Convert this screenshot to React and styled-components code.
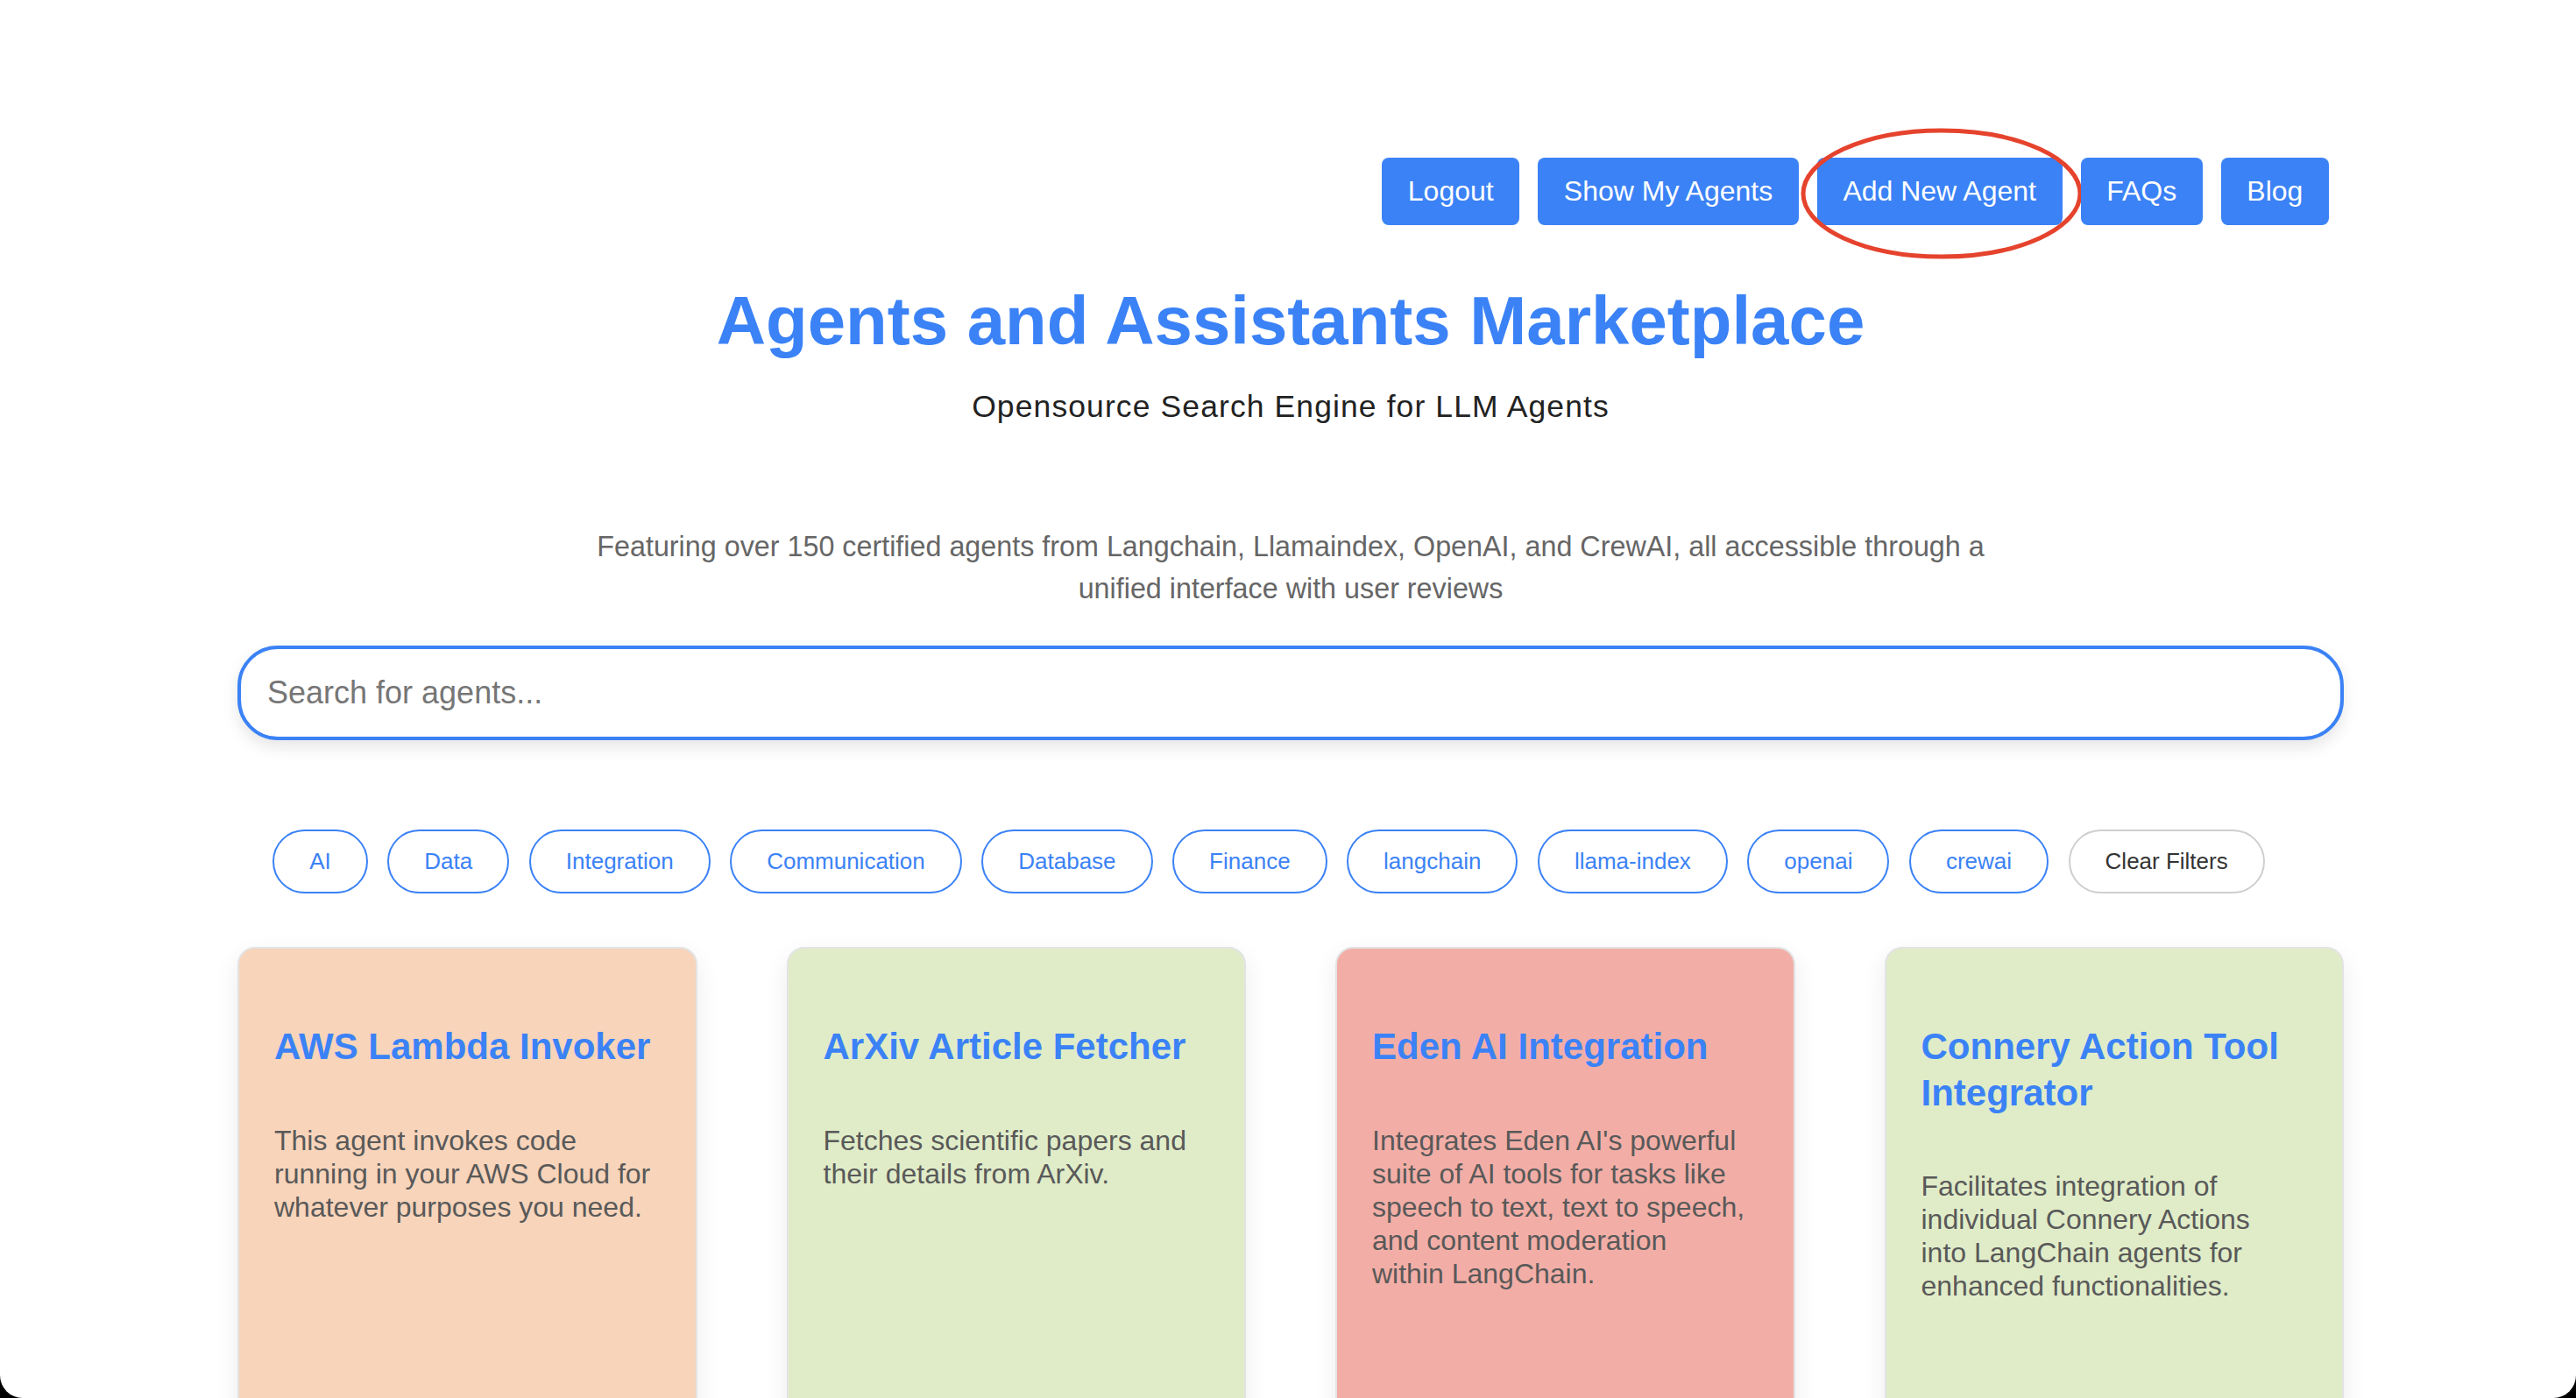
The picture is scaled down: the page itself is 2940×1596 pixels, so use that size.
import React from "react"
import styled, { createGlobalStyle } from "styled-components"

const GlobalStyle = createGlobalStyle`
  * { box-sizing: border-box; }
  html, body {
    margin: 0;
    padding: 0;
    background: #000;
  }
  body {
    font-family: "Liberation Sans", Arial, Helvetica, sans-serif;
  }
`;

const Page = styled.div`
  position: relative;
  width: 2940px;
  height: 1596px;
  overflow: hidden;
  background: #fff;
  border-radius: 0 0 26px 26px;
`;

const Container = styled.main`
  width: 2404px;
  margin: 0 0 0 271px;
  display: flex;
  flex-direction: column;
  align-items: center;
`;

const Nav = styled.nav`
  align-self: stretch;
  display: flex;
  justify-content: flex-end;
  gap: 21px;
  padding: 180px 17px 0 0;
`;

const NavItem = styled.div`
  position: relative;
`;

const NavButton = styled.button`
  height: 77px;
  padding: 0 29.6px;
  background: #3b82f6;
  color: #fff;
  border: none;
  border-radius: 8px;
  font-family: inherit;
  font-size: 32px;
  cursor: pointer;
`;

const Annotation = styled.svg`
  position: absolute;
  left: 50%;
  top: 50%;
  width: 326px;
  height: 152px;
  transform: translate(calc(-50% + 2px), calc(-50% + 2px));
  pointer-events: none;
  overflow: visible;
`;

const Title = styled.h1`
  margin: 62px 0 0;
  font-size: 78px;
  line-height: 94px;
  font-weight: 700;
  color: #3b82f6;
`;

const Subtitle = styled.p`
  margin: 26px 0 0;
  font-size: 35.5px;
  line-height: 51px;
  letter-spacing: 1.1px;
  color: #222;
`;

const Intro = styled.p`
  margin: 110px 0 0;
  max-width: 1640px;
  text-align: center;
  font-size: 32.3px;
  line-height: 48px;
  color: #666;
`;

const SearchInput = styled.input`
  margin-top: 41px;
  width: 100%;
  height: 108px;
  padding: 0 30px;
  border: 4px solid #3b82f6;
  border-radius: 46px;
  box-shadow: 0 8px 18px rgba(0, 0, 0, 0.1);
  font-family: inherit;
  font-size: 36px;
  color: #222;
  outline: none;

  &::placeholder {
    color: #767676;
  }
`;

const FilterRow = styled.div`
  margin-top: 102px;
  display: flex;
  flex-wrap: wrap;
  justify-content: center;
  gap: 22.5px;
  padding-right: 50px;
`;

const Chip = styled.button`
  height: 73px;
  padding: 0 40px;
  border-radius: 999px;
  border: 2px solid ${p => (p.$clear ? "#cfcfcf" : "#3b82f6")};
  background: #fff;
  color: ${p => (p.$clear ? "#333" : "#3b82f6")};
  font-family: inherit;
  font-size: 26px;
  cursor: pointer;
`;

const CardGrid = styled.section`
  margin-top: 61px;
  align-self: stretch;
  display: grid;
  grid-template-columns: repeat(4, 1fr);
  column-gap: 102px;
`;

const Card = styled.article`
  height: 700px;
  padding: 86px 40px 40px;
  background: ${p => p.$bg};
  border: 2px solid #e3e3e3;
  border-radius: 20px;
  box-shadow: 0 10px 28px rgba(0, 0, 0, 0.08);
`;

const CardTitle = styled.h2`
  margin: 0 0 61px;
  font-size: 42px;
  line-height: 52.5px;
  font-weight: 700;
  color: #3b82f6;
`;

const CardText = styled.p`
  margin: 0;
  font-size: 32px;
  line-height: 38px;
  color: #595959;
  white-space: pre-line;
`;

const navItems = ["Logout", "Show My Agents", "Add New Agent", "FAQs", "Blog"];

const filters = [
  "AI",
  "Data",
  "Integration",
  "Communication",
  "Database",
  "Finance",
  "langchain",
  "llama-index",
  "openai",
  "crewai",
];

const agents = [
  {
    title: "AWS Lambda Invoker",
    text: "This agent invokes code\nrunning in your AWS Cloud for\nwhatever purposes you need.",
    bg: "#f7d4ba",
  },
  {
    title: "ArXiv Article Fetcher",
    text: "Fetches scientific papers and\ntheir details from ArXiv.",
    bg: "#e0ecc8",
  },
  {
    title: "Eden AI Integration",
    text: "Integrates Eden AI's powerful\nsuite of AI tools for tasks like\nspeech to text, text to speech,\nand content moderation\nwithin LangChain.",
    bg: "#f2aea6",
  },
  {
    title: "Connery Action Tool Integrator",
    text: "Facilitates integration of\nindividual Connery Actions\ninto LangChain agents for\nenhanced functionalities.",
    bg: "#e0ecc8",
  },
];

const App = () => (
  <>
    <GlobalStyle />
    <Page>
      <Container>
        <Nav>
          {navItems.map(label => (
            <NavItem key={label}>
              <NavButton>{label}</NavButton>
              {label === "Add New Agent" && (
                <Annotation viewBox="0 0 326 152">
                  <ellipse cx="163" cy="76" rx="158" ry="72" fill="none" stroke="#e5432d" strokeWidth="5" />
                </Annotation>
              )}
            </NavItem>
          ))}
        </Nav>

        <Title>Agents and Assistants Marketplace</Title>
        <Subtitle>Opensource Search Engine for LLM Agents</Subtitle>
        <Intro>
          Featuring over 150 certified agents from Langchain, Llamaindex, OpenAI, and CrewAI, all accessible through a unified interface with user reviews
        </Intro>

        <SearchInput placeholder="Search for agents..." />

        <FilterRow>
          {filters.map(f => (
            <Chip key={f}>{f}</Chip>
          ))}
          <Chip $clear>Clear Filters</Chip>
        </FilterRow>

        <CardGrid>
          {agents.map(a => (
            <Card key={a.title} $bg={a.bg}>
              <CardTitle>{a.title}</CardTitle>
              <CardText>{a.text}</CardText>
            </Card>
          ))}
        </CardGrid>
      </Container>
    </Page>
  </>
)

export default App
